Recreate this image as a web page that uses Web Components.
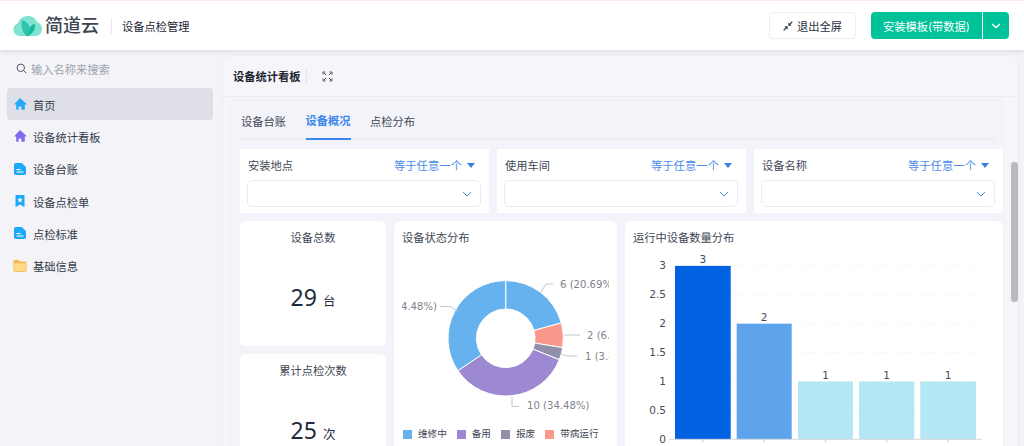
<!DOCTYPE html>
<html lang="zh">
<head>
<meta charset="utf-8">
<title>设备点检管理</title>
<style>
  html, body { margin: 0; height: 446px; overflow: hidden; }
  body { font-family: "Inter", "Noto Sans CJK SC", sans-serif; color: #2b3648; background: #f3f3f8; }
</style>
</head>
<body>
<app-shell>
  <top-bar slot="top"></top-bar>
  <side-nav slot="side">
    <nav-item active label="首页">
      <svg slot="icon" width="14" height="14" viewBox="0 0 14 14"><path d="M7 1 13.300 6.700c.3.3.1.8-.3.8h-1.200v4.600c0 .4-.3.600-.6.600H8.400V9.500H5.600v3.200H3.800c-.3 0-.6-.2-.6-.6V7.500H2c-.4 0-.6-.5-.3-.8z" fill="#25a9f7"/></svg>
    </nav-item>
    <nav-item label="设备统计看板">
      <svg slot="icon" width="14" height="14" viewBox="0 0 14 14"><path d="M7 1 13.300 6.700c.3.3.1.8-.3.8h-1.200v4.600c0 .4-.3.600-.6.600H8.400V9.500H5.600v3.200H3.800c-.3 0-.6-.2-.6-.6V7.500H2c-.4 0-.6-.5-.3-.8z" fill="#7f6cf2"/></svg>
    </nav-item>
    <nav-item label="设备台账">
      <svg slot="icon" width="14" height="14" viewBox="0 0 14 14"><path d="M3 1h5.800L13 4.900V11a2 2 0 0 1-2 2H3a2 2 0 0 1-2-2V3a2 2 0 0 1 2-2z" fill="#1fa8f5"/><path d="M3.500 7.500h4M3.500 10h7" stroke="#fff" stroke-width="1.200"/></svg>
    </nav-item>
    <nav-item label="设备点检单">
      <svg slot="icon" width="14" height="14" viewBox="0 0 14 14"><path d="M2.500 1.500c0-.3.200-.5.500-.5h8c.3 0 .5.200.5.500v11.300c0 .2-.2.300-.4.200L7 10.600 2.900 13c-.2.100-.4 0-.4-.2z" fill="#1fa8f5"/><path d="m7 3.300.8 1.700 1.800.2-1.300 1.300.3 1.800L7 7.400l-1.600.9.300-1.800-1.300-1.300 1.800-.2z" fill="#fff"/></svg>
    </nav-item>
    <nav-item label="点检标准">
      <svg slot="icon" width="14" height="14" viewBox="0 0 14 14"><path d="M3 1h5.800L13 4.900V11a2 2 0 0 1-2 2H3a2 2 0 0 1-2-2V3a2 2 0 0 1 2-2z" fill="#1fa8f5"/><path d="M3.500 7.500h4M3.500 10h7" stroke="#fff" stroke-width="1.200"/></svg>
    </nav-item>
    <nav-item label="基础信息">
      <svg slot="icon" width="14" height="14" viewBox="0 0 14 14"><path d="M.5 2.500C.5 1.700 1.100 1 1.900 1h3.700l1.600 1.500h4.900c.8 0 1.400.6 1.400 1.400v7.700c0 .7-.6 1.300-1.300 1.300H1.800c-.7 0-1.300-.6-1.300-1.300z" fill="#f4b650"/><path d="M1.200 4.300h11.600v7.200c0 .4-.3.700-.7.700H1.900c-.4 0-.7-.3-.7-.7z" fill="#fdd98a"/></svg>
    </nav-item>
  </side-nav>
  <board-panel slot="main">
    <filter-card label="安装地点"></filter-card>
    <filter-card label="使用车间"></filter-card>
    <filter-card label="设备名称"></filter-card>
    <stat-card slot="stats" label="设备总数" value="29" unit="台"></stat-card>
    <stat-card slot="stats" label="累计点检次数" value="25" unit="次"></stat-card>
    <pie-card slot="pie"></pie-card>
    <bar-card slot="bar"></bar-card>
  </board-panel>
</app-shell>

<script>
function defineEl(name, html, extra) {
  customElements.define(name, class extends HTMLElement {
    constructor() {
      super();
      this.attachShadow({ mode: 'open' }).innerHTML = html;
    }
    connectedCallback() {
      if (extra) extra(this.shadowRoot, this);
    }
  });
}

defineEl('app-shell', `
  <style>
    :host { display: grid; grid-template-columns: 222px 1fr; grid-template-rows: 50px 396px; height: 446px; overflow: hidden; }
    .top { grid-column: 1 / 3; position: relative; z-index: 2; }
  </style>
  <div class="top"><slot name="top"></slot></div>
  <slot name="side"></slot>
  <slot name="main"></slot>
`);

defineEl('top-bar', `
  <style>
    :host { display: flex; align-items: center; box-sizing: border-box; height: 50px; background: #fff; border-top: 1px solid #fbe9e5; box-shadow: 0 1px 5px rgba(60,60,90,.16); padding: 0 15px 0 13px; }
    .logo { display: flex; align-items: center; gap: 2px; }
    .name { font-size: 18px; font-weight: 500; line-height: 24px; color: #3d4652; }
    .sep { width: 1px; height: 16px; background: #e8e9ee; margin: 0 10px 0 12px; }
    .app { font-size: 11.250px; color: #1f2733; flex: 1; }
    .exit { display: flex; align-items: center; justify-content: center; gap: 4px; box-sizing: border-box; width: 87px; height: 27px; border: 1px solid #eceef2; border-radius: 4px; font-size: 11.250px; color: #2b3442; margin-right: 15px; }
    .install { display: flex; height: 27px; color: #fff; font-size: 11.250px; }
    .main, .more { background: #00c29a; display: flex; align-items: center; justify-content: center; }
    .main { width: 111px; border-radius: 4px 0 0 4px; }
    .more { width: 26px; margin-left: 1px; border-radius: 0 4px 4px 0; }
  </style>
  <div class="logo">
    <svg width="30" height="22" viewBox="0 0 30 22">
      <path d="M7 21a6.500 6.500 0 0 1-2-12.700C6.300 3.800 10.500 1 15 1c4.300 0 7.800 2.500 9.300 6.300A7.200 7.200 0 0 1 23.500 21z" fill="#7fe3d0"/>
      <path d="M9 5.500c4 .8 6.800 3.400 7.400 7.500.9-1.900 2.900-3.500 5.600-4 .5 5-2 9.800-7.800 12.500C10.400 18.600 8 12.500 9 5.500z" fill="#17b99c"/>
      <path d="M9 5.500c4 .8 6.800 3.400 7.400 7.500.2 3-.6 5.800-2.200 8C10.400 18.600 8 12.500 9 5.500z" fill="#2cc5ac"/>
    </svg>
    <span class="name">简道云</span>
  </div>
  <div class="sep"></div>
  <div class="app">设备点检管理</div>
  <div class="exit">
    <svg width="10" height="10" viewBox="0 0 10 10"><path d="M9.300.7 6.500 3.500" stroke="#2b3442" stroke-width="1.200"/><path d="M5.300 1.500v3.200h3.200z" fill="#2b3442"/><path d="M.7 9.300 3.500 6.500" stroke="#2b3442" stroke-width="1.200"/><path d="M1.500 5.300h3.200v3.200z" fill="#2b3442"/></svg>
    <span>退出全屏</span>
  </div>
  <div class="install">
    <div class="main">安装模板(带数据)</div>
    <div class="more"><svg width="10" height="6" viewBox="0 0 10 6"><path d="M1 1l4 3.600L9 1" fill="none" stroke="#fff" stroke-width="1.300"/></svg></div>
  </div>
`);

defineEl('side-nav', `
  <style>
    :host { display: block; background: #f3f3f8; padding: 0 9px 0 7px; }
    .search { display: flex; align-items: center; gap: 4px; height: 37px; padding-left: 9px; font-size: 11.250px; color: #9ea3ad; }
    .list { display: flex; flex-direction: column; margin-top: 1px; }
  </style>
  <div class="search">
    <svg width="11" height="11" viewBox="0 0 11 11"><circle cx="4.800" cy="4.800" r="3.700" fill="none" stroke="#4c5563" stroke-width="1"/><path d="m7.500 7.500 2.700 2.700" stroke="#4c5563" stroke-width="1"/></svg>
    <span>输入名称来搜索</span>
  </div>
  <div class="list"><slot></slot></div>
`);

defineEl('nav-item', `
  <style>
    :host { display: flex; align-items: center; gap: 6px; height: 32.300px; padding-left: 6px; font-size: 11.250px; color: #333c4a; border-radius: 4px; }
    :host([active]) { background: #dfdfe8; }
    .ic { width: 14px; height: 14px; display: flex; }
    #t { position: relative; top: .5px; }
  </style>
  <span class="ic"><slot name="icon"></slot></span>
  <span id="t"></span>
`, (root, el) => { root.getElementById('t').textContent = el.getAttribute('label'); });

defineEl('board-panel', `
  <style>
    :host { display: block; height: 390px; margin: 6px 6px 0 1px; background: #f6f6fa; border-radius: 8px 8px 0 0; position: relative; overflow: hidden; box-shadow: 0 0 3px rgba(80,80,110,.08); }
    .head { display: flex; align-items: center; height: 41px; padding-left: 10px; border-bottom: 1px solid #ecedf2; box-sizing: border-box; font-size: 11.250px; font-weight: 700; color: #1f2733; }
    .sep { width: 1px; height: 15px; background: #e3e4ea; margin: 0 15px 0 5px; }
    .inner { margin: 3px 15px 0 8px; background: #f3f4f9; padding: 0 0 0 9px; height: 346px; overflow: hidden; box-shadow: 0 0 3px rgba(80,80,110,.06); }
    .tabs { display: flex; gap: 19.500px; margin: 0 8px 0 1px; height: 38px; border-bottom: 2px solid #ebecf1; font-size: 11.250px; color: #3f4755; }
    .tabs div { display: flex; align-items: center; padding-top: 2px; box-sizing: border-box; height: 40px; }
    .tabs .on { color: #3b86ee; font-weight: 700; border-bottom: 2px solid #3b86ee; }
    .filters { display: grid; grid-template-columns: repeat(3, 1fr); gap: 8px; margin-top: 9px; }
    .charts { display: grid; grid-template-columns: 146px 223px 378px; gap: 8px; margin-top: 8px; }
    .stats { display: flex; flex-direction: column; gap: 8px; }
    .bar { position: absolute; left: 788px; top: 106px; width: 7px; height: 140px; background: #babac2; border-radius: 3px; }
  </style>
  <div class="head">
    <span>设备统计看板</span>
    <span class="sep"></span>
    <svg width="11" height="11" viewBox="0 0 11 11"><path d="M1 3.500V1h2.500M7.500 1H10v2.500M10 7.500V10H7.500M3.500 10H1V7.500M2 2l2 2M9 2 7 4M9 9 7 7M2 9l2-2" fill="none" stroke="#4b5462" stroke-width="1"/></svg>
  </div>
  <div class="inner">
    <div class="tabs">
      <div>设备台账</div>
      <div class="on">设备概况</div>
      <div>点检分布</div>
    </div>
    <div class="filters"><slot></slot></div>
    <div class="charts">
      <div class="stats"><slot name="stats"></slot></div>
      <slot name="pie"></slot>
      <slot name="bar"></slot>
    </div>
  </div>
  <div class="bar"></div>
`);

defineEl('filter-card', `
  <style>
    :host { display: block; background: #fff; height: 64px; box-sizing: border-box; padding: 6px 8px 0 7px; font-size: 11.250px; color: #3f4755; }
    .row { display: flex; justify-content: space-between; align-items: center; height: 20px; margin: 0 6px 5px 1px; }
    .mode { display: flex; align-items: center; gap: 5px; color: #4a8ce8; letter-spacing: .1px; }
    .mode i { width: 0; height: 0; border: 4px solid transparent; border-top: 5px solid #3b7fe6; border-bottom: 0; }
    .box { display: flex; align-items: center; justify-content: flex-end; height: 27px; box-sizing: border-box; border: 1px solid #e9ebf0; border-radius: 5px; padding-right: 8px; }
  </style>
  <div class="row">
    <span id="t"></span>
    <span class="mode">等于任意一个<i></i></span>
  </div>
  <div class="box"><svg width="10" height="6" viewBox="0 0 10 6"><path d="M1 1l4 4 4-4" fill="none" stroke="#4a8ce8" stroke-width="1"/></svg></div>
`, (root, el) => { root.getElementById('t').textContent = el.getAttribute('label'); });

defineEl('stat-card', `
  <style>
    :host { display: flex; flex-direction: column; align-items: center; background: #fff; border-radius: 6px; height: 125px; flex: none; color: #1f2a3c; }
    .t { font-size: 11.250px; color: #3f4755; margin-top: 9px; line-height: 16px; }
    .v { margin-top: 36px; font-family: "Noto Sans", "Noto Sans CJK SC", sans-serif; font-size: 23px; line-height: 30px; }
    .u { font-size: 12.500px; }
  </style>
  <div class="t" id="t"></div>
  <div class="v"><span id="v"></span> <span class="u" id="u"></span></div>
`, (root, el) => {
  root.getElementById('t').textContent = el.getAttribute('label');
  root.getElementById('v').textContent = el.getAttribute('value');
  root.getElementById('u').textContent = el.getAttribute('unit');
});

defineEl('pie-card', `
  <style>
    :host { display: block; background: #fff; border-radius: 6px; height: 258px; position: relative; }
    .t { font-size: 11.250px; color: #3f4755; padding: 9px 0 0 8px; line-height: 16px; }
    svg { display: block; margin: 11px 0 0 8px; }
    text { font-family: "DejaVu Sans", sans-serif; font-size: 10.100px; fill: #80828c; }
    .legend { display: flex; gap: 10px; padding-left: 9px; margin-top: -3px; font-size: 9.600px; line-height: 14px; color: #3f4755; }
    .legend span { display: flex; align-items: center; gap: 6px; white-space: nowrap; }
    .legend i { width: 9px; height: 9px; display: block; }
  </style>
  <div class="t">设备状态分布</div>
  <svg id="pie" width="207" height="173" viewBox="402 257 207 173"></svg>
  <div class="legend">
    <span><i style="background:#66b2ee"></i>维修中</span>
    <span><i style="background:#9d88d2"></i>备用</span>
    <span><i style="background:#9190a9"></i>报废</span>
    <span><i style="background:#fa988b"></i>带病运行</span>
  </div>
`, (root) => {
  // 数据顺序: 从12点方向顺时针
  const data = [[6, '#66b2ee'], [2, '#fa988b'], [1, '#9190a9'], [10, '#9d88d2'], [10, '#66b2ee']];
  const cx = 505.7, cy = 338.3, R = 57.7, r = 29.3, total = 29;
  let out = '', a = -Math.PI / 2;
  const pt = (ang, rad) => `${(cx + Math.cos(ang) * rad).toFixed(2)} ${(cy + Math.sin(ang) * rad).toFixed(2)}`;
  for (const [v, color] of data) {
    const b = a + v / total * Math.PI * 2;
    const large = b - a > Math.PI ? 1 : 0;
    out += `<path d="M${pt(a, R)}A${R} ${R} 0 ${large} 1 ${pt(b, R)}L${pt(b, r)}A${r} ${r} 0 ${large} 0 ${pt(a, r)}Z" fill="${color}" stroke="#fff" stroke-width="1"/>`;
    a = b;
  }
  const lines = ['M541 292 546 284H553', 'M564 335H580', 'M561 354 567 356H577', 'M512 397V406.500H519', 'M458 311 450 306.500H440'];
  for (const d of lines) out += `<path d="${d}" fill="none" stroke="#c6c7cd" stroke-width="1"/>`;
  out += `<text x="560" y="288">6 (20.69%)</text><text x="587" y="339">2 (6.90%)</text><text x="585" y="360">1 (3.45%)</text><text x="527" y="409">10 (34.48%)</text><text x="437" y="310" text-anchor="end">10 (34.48%)</text>`;
  root.getElementById('pie').innerHTML = out;
});

defineEl('bar-card', `
  <style>
    :host { display: block; background: #fff; border-radius: 6px; height: 258px; }
    .t { font-size: 11.250px; color: #3f4755; padding: 10px 0 0 8px; line-height: 15px; }
    svg { display: block; }
    text { font-family: "DejaVu Sans", sans-serif; font-size: 10.500px; fill: #454c5a; }
  </style>
  <div class="t">运行中设备数量分布</div>
  <svg id="bars" width="378" height="233" viewBox="625 246 378 233"></svg>
`, (root) => {
  const y0 = 439.3, unit = 57.8;
  const bars = [[675, 55.700, 3, '#0262e4'], [736.700, 55, 2, '#5ea4ec'], [798, 55, 1, '#b3e7f4'], [859, 55.300, 1, '#b3e7f4'], [920.300, 55.700, 1, '#b3e7f4']];
  let out = '';
  for (let i = 0; i <= 6; i++) {
    const v = i / 2, y = y0 - v * unit;
    if (i) out += `<path d="M669 ${y}H982" stroke="#f4f5f7" stroke-dasharray="3 3"/>`;
    out += `<text x="666" y="${y + 3.500}" text-anchor="end">${v}</text>`;
  }
  for (const [x, w, v, c] of bars) {
    out += `<rect x="${x}" y="${y0 - v * unit}" width="${w}" height="${v * unit}" fill="${c}"/>`;
    out += `<text x="${x + w / 2}" y="${y0 - v * unit - 3}" text-anchor="middle">${v}</text>`;
    out += `<path d="M${x + w / 2} ${y0}v3" stroke="#c9ccd3"/>`;
  }
  out += `<path d="M669 ${y0}H982" stroke="#d5d7dd"/>`;
  root.getElementById('bars').innerHTML = out;
});
</script>
</body>
</html>
